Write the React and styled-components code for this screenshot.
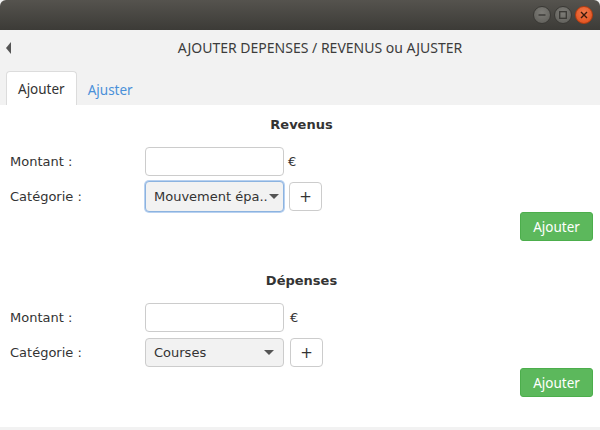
import React from "react";
import styled, { createGlobalStyle } from "styled-components";

const Global = createGlobalStyle`
	html, body { margin: 0; padding: 0; }
	body {
		width: 600px;
		height: 430px;
		overflow: hidden;
		background: #f2f2f2;
		font-family: "DejaVu Sans", sans-serif;
	}
`;

const Window = styled.div`
	display: flex;
	flex-direction: column;
	width: 600px;
	height: 430px;
`;

const TitleBar = styled.div`
	height: 30px;
	flex-shrink: 0;
	display: flex;
	align-items: center;
	justify-content: flex-end;
	gap: 3px;
	padding-right: 7px;
	box-sizing: border-box;
	background: linear-gradient(#55534e, #3c3b37);
	border-radius: 6px 6px 0 0;
`;

const WinButton = styled.div`
	width: 16px;
	height: 16px;
	border-radius: 50%;
	display: flex;
	align-items: center;
	justify-content: center;
	background: ${(p) =>
		p.$close
			? "radial-gradient(circle at 50% 35%, #f07a4c, #df4a16)"
			: "radial-gradient(circle at 50% 35%, #7d7c77, #5d5c57)"};
	border: 1px solid ${(p) => (p.$close ? "#b23c10" : "#3a3935")};
`;

const Header = styled.div`
	height: 35px;
	flex-shrink: 0;
	display: flex;
	align-items: center;
	position: relative;
	justify-content: center;
	font-family: "Noto Sans", sans-serif;
	font-size: 14px;
	color: #3c3c3c;
	padding-left: 40px;
`;

const Back = styled.div`
	position: absolute;
	left: 6px;
	top: 12px;
	width: 0;
	height: 0;
	border-top: 6px solid transparent;
	border-bottom: 6px solid transparent;
	border-right: 5px solid #555;
`;

const Tabs = styled.div`
	display: flex;
	align-items: flex-end;
	height: 40px;
	padding-left: 6px;
	flex-shrink: 0;
	box-sizing: border-box;
`;

const Tab = styled.div`
	height: ${(p) => (p.$active ? "34px" : "32px")};
	padding: 0 ${(p) => (p.$active ? 11 : 10)}px;
	display: flex;
	align-items: center;
	font-family: "Noto Sans", sans-serif;
	font-size: 13.5px;
	color: ${(p) => (p.$active ? "#333" : "#4a90d9")};
	background: ${(p) => (p.$active ? "#fff" : "transparent")};
	border: 1px solid ${(p) => (p.$active ? "#dcdcdc" : "transparent")};
	border-bottom: none;
	border-radius: 4px 4px 0 0;
	box-sizing: border-box;
`;

const Content = styled.div`
	background: #fff;
	flex: 1;
	margin-bottom: 3px;
	display: flex;
	flex-direction: column;
	padding: 12px 7px 0 10px;
	gap: 32px;
	color: #333;
	font-size: 13px;
`;

const Section = styled.div`
	display: flex;
	flex-direction: column;
`;

const Heading = styled.div`
	font-weight: bold;
	text-align: center;
	margin-bottom: 13px;
	line-height: 16px;
`;

const Row = styled.div`
	display: flex;
	align-items: center;
	height: ${(p) => (p.$last ? 31 : 30)}px;
	margin-bottom: ${(p) => (p.$last ? 0 : 5)}px;
`;

const Label = styled.div`
	width: 135px;
`;

const Input = styled.div`
	width: 139px;
	height: 29px;
	border: 1px solid #ccc;
	border-radius: 4px;
	box-sizing: border-box;
	background: #fff;
`;

const Euro = styled.span`
	margin-left: ${(p) => p.$gap}px;
`;

const Select = styled.div`
	width: 139px;
	height: ${(p) => (p.$focus ? 31 : 29)}px;
	border: 1px solid ${(p) => (p.$focus ? "#8cb3e0" : "#ccc")};
	box-shadow: ${(p) => (p.$focus ? "0 0 0 1px #b8d1f0" : "none")};
	border-radius: 4px;
	box-sizing: border-box;
	background: #f2f2f2;
	display: flex;
	align-items: center;
	padding: 0 ${(p) => (p.$focus ? 4 : 9)}px 0 8px;
	white-space: nowrap;
	span {
		flex: 1;
	}
`;

const Caret = styled.div`
	width: 0;
	height: 0;
	margin-left: ${(p) => (p.$tight ? -6 : 0)}px;
	border-left: 5px solid transparent;
	border-right: 5px solid transparent;
	border-top: 5px solid #555;
	flex-shrink: 0;
`;

const PlusButton = styled.div`
	width: 33px;
	height: 29px;
	margin-left: ${(p) => p.$gap}px;
	border: 1px solid #ccc;
	border-radius: 4px;
	box-sizing: border-box;
	display: flex;
	align-items: center;
	justify-content: center;
	font-size: 15px;
	background: #fff;
`;

const Actions = styled.div`
	display: flex;
	justify-content: flex-end;
`;

const Submit = styled.div`
	width: 73px;
	height: 29px;
	border-radius: 3px;
	background: #5cb85c;
	border: 1px solid #4cae4c;
	box-sizing: border-box;
	color: #fff;
	font-family: "Noto Sans", sans-serif;
	font-size: 13.5px;
	display: flex;
	align-items: center;
	justify-content: center;
`;

const FormSection = ({ title, category, focus }) => (
	<Section>
		<Heading>{title}</Heading>
		<Row>
			<Label>Montant :</Label>
			<Input />
			<Euro $gap={focus ? 4 : 6}>€</Euro>
		</Row>
		<Row $last>
			<Label>Catégorie :</Label>
			<Select $focus={focus}>
				<span>{category}</span>
				<Caret $tight={focus} />
			</Select>
			<PlusButton $gap={focus ? 5 : 6}>+</PlusButton>
		</Row>
		<Actions>
			<Submit>Ajouter</Submit>
		</Actions>
	</Section>
);

export default function App() {
	return (
		<>
			<Global />
			<Window>
				<TitleBar>
					<WinButton>
						<svg width="8" height="8" viewBox="0 0 8 8">
							<path d="M0.5 4h7" stroke="#3a3935" strokeWidth="1.4" />
						</svg>
					</WinButton>
					<WinButton>
						<svg width="8" height="8" viewBox="0 0 8 8">
							<rect x="0.7" y="0.7" width="6.6" height="6.6" fill="none" stroke="#3a3935" strokeWidth="1.3" />
						</svg>
					</WinButton>
					<WinButton $close>
						<svg width="8" height="8" viewBox="0 0 8 8">
							<path d="M1 1l6 6M7 1l-6 6" stroke="#3a1a0c" strokeWidth="1.4" />
						</svg>
					</WinButton>
				</TitleBar>
				<Header>
					<Back />
					AJOUTER DEPENSES / REVENUS ou AJUSTER
				</Header>
				<Tabs>
					<Tab $active>Ajouter</Tab>
					<Tab>Ajuster</Tab>
				</Tabs>
				<Content>
					<FormSection title="Revenus" category="Mouvement épa.." focus />
					<FormSection title="Dépenses" category="Courses" />
				</Content>
			</Window>
		</>
	);
}
